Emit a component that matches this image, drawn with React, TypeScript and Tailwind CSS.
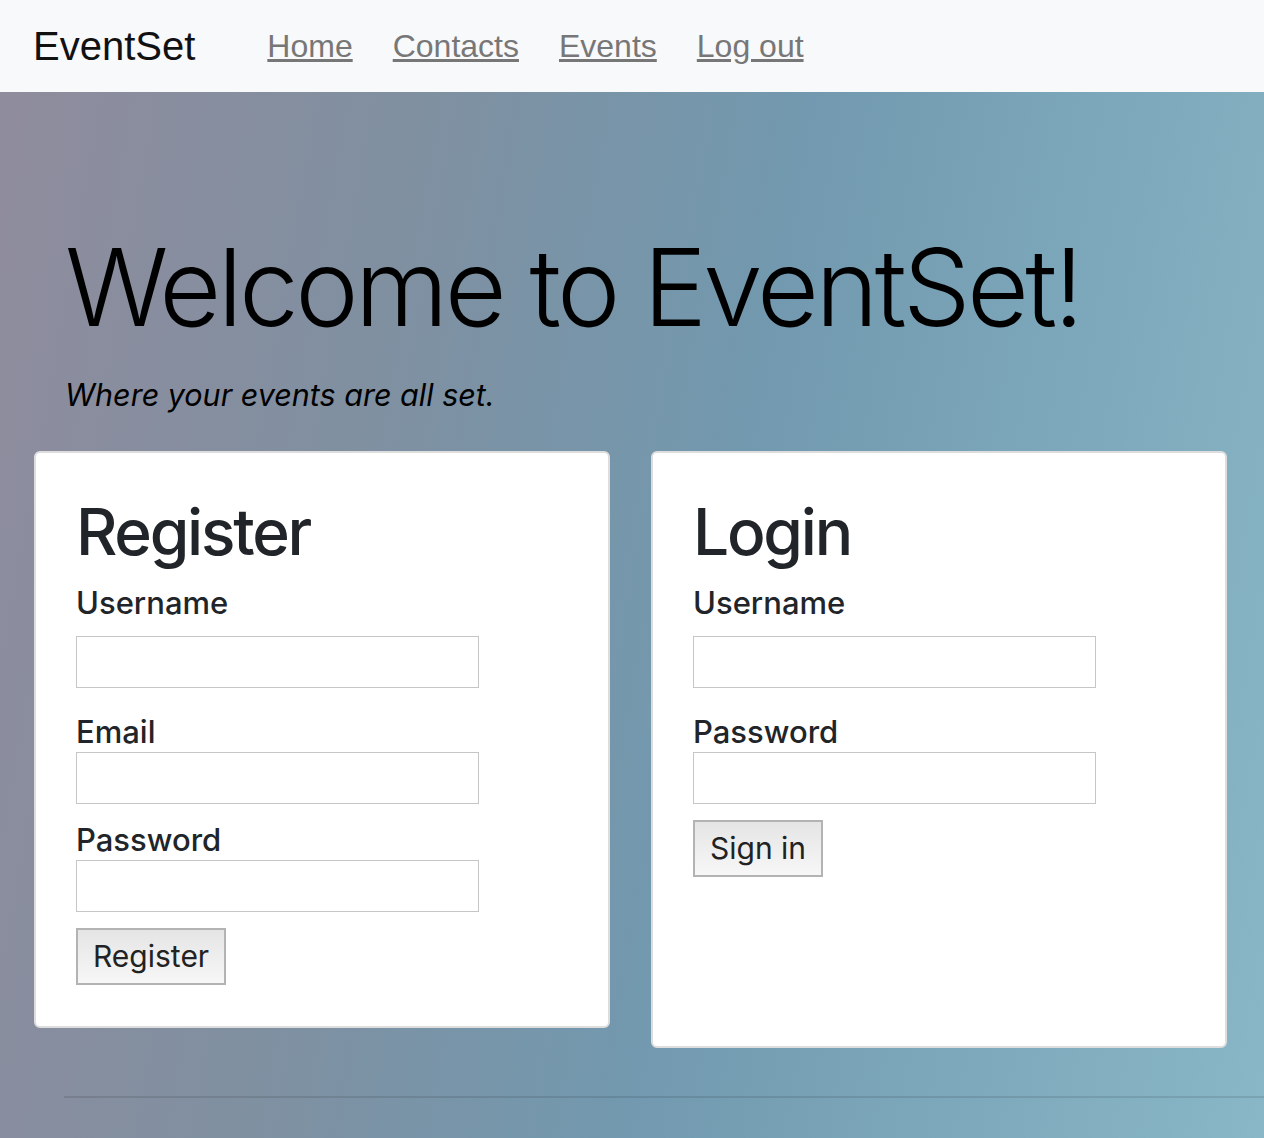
const sans = { fontFamily: '"Liberation Sans", Arial, sans-serif' };

function Field({ label, first }: { label: string; first?: boolean }) {
  return (
    <>
      <label
        className={
          first
            ? "mt-[23px] block text-[31px] leading-none font-medium text-[#212529]"
            : "mt-[28px] block text-[31px] leading-none font-medium text-[#212529]"
        }
      >
        {label}
      </label>
      <input
        type="text"
        className={
          first
            ? "mt-[18px] block h-[52px] w-[403px] border border-[#c6c6c6] bg-white outline-none"
            : "mt-[5px] block h-[52px] w-[403px] border border-[#c6c6c6] bg-white outline-none"
        }
      />
    </>
  );
}

function Card({ title, children, tall }: { title: string; children: React.ReactNode; tall?: boolean }) {
  return (
    <div
      className={
        tall
          ? "h-[597px] w-[576px] rounded-[6px] border-2 border-[#dddddd] bg-white pl-[40px] pt-[47px]"
          : "h-[577px] w-[576px] rounded-[6px] border-2 border-[#dddddd] bg-white pl-[40px] pt-[47px]"
      }
    >
      <h2 className="text-[64px] leading-none font-medium tracking-[-0.035em] text-[#212529]">{title}</h2>
      {children}
    </div>
  );
}

function Btn({ label }: { label: string }) {
  return (
    <button className="mt-[16px] block h-[57px] border-2 border-[#b3b3b3] bg-gradient-to-b from-[#e5e5e5] to-[#f7f7f7] px-[15px] text-[30px] leading-none text-[#222]">
      {label}
    </button>
  );
}

export default function App() {
  return (
    <div className="min-h-[1138px] w-full" style={{ fontFamily: "Inter, Roboto, sans-serif" }}>
      <nav className="flex h-[92px] items-center bg-[#f8f9fa] px-[33px]" style={sans}>
        <a href="#" className="text-[40px] leading-none text-[#111]">
          EventSet
        </a>
        <div className="ml-[72px] flex items-center gap-[40px] text-[32px] leading-none text-[#777]">
          <a href="#" className="underline">Home</a>
          <a href="#" className="underline">Contacts</a>
          <a href="#" className="underline">Events</a>
          <a href="#" className="underline">Log out</a>
        </div>
      </nav>

      <main className="min-h-[1046px] bg-[linear-gradient(100deg,#8f8c9d_0%,#7f90a1_30%,#7299af_56%,#7ea9bc_80%,#89b7c7_100%)] pb-[40px] pt-[142px]">
        <div className="px-[65px]">
          <h1 className="text-[107px] leading-none font-light tracking-[-0.034em] text-black">
            Welcome to EventSet!
          </h1>
          <p className="mt-[39px] text-[30.5px] leading-none italic text-black">Where your events are all set.</p>
        </div>

        <div className="mt-[40px] flex items-start gap-[41px] px-[34px]">
          <Card title="Register">
            <Field label="Username" first />
            <Field label="Email" />
            <label className="mt-[20px] block text-[31px] leading-none font-medium text-[#212529]">Password</label>
            <input type="password" className="mt-[5px] block h-[52px] w-[403px] border border-[#c6c6c6] bg-white outline-none" />
            <Btn label="Register" />
          </Card>
          <Card title="Login" tall>
            <Field label="Username" first />
            <Field label="Password" />
            <Btn label="Sign in" />
          </Card>
        </div>

        <hr className="ml-[64px] mt-[48px] border-t-2 border-black/10" />
      </main>
    </div>
  );
}
